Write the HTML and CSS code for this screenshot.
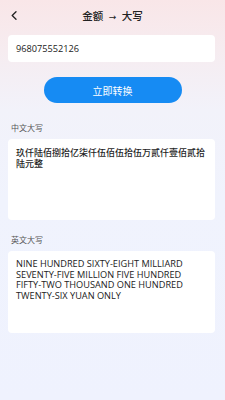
FILE: index.html
```html
<!DOCTYPE html>
<html lang="zh">
<head>
<meta charset="utf-8">
<meta name="viewport" content="width=device-width, initial-scale=1">
<link rel="stylesheet" href="styles.css">
</head>
<body>
<div class="page">
  <header class="header">
    <div class="back">
      <svg width="6" height="9" viewBox="0 0 6 9"><path d="M5 0.8 L1.2 4.5 L5 8.2" fill="none" stroke="#222" stroke-width="1.3" stroke-linecap="round" stroke-linejoin="round"/></svg>
    </div>
    <div class="title">金额 <span class="arrow">→</span> 大写</div>
    <div></div>
  </header>
  <div class="input-card">968075552126</div>
  <div class="btn-row"><button class="btn">立即转换</button></div>
  <div class="label">中文大写</div>
  <div class="card cn">玖仟陆佰捌拾亿柒仟伍佰伍拾伍万贰仟壹佰贰拾陆元整</div>
  <div class="label label2">英文大写</div>
  <div class="card en">NINE HUNDRED SIXTY-EIGHT MILLIARD SEVENTY-FIVE MILLION FIVE HUNDRED FIFTY-TWO THOUSAND ONE HUNDRED TWENTY-SIX YUAN ONLY</div>
</div>
</body>
</html>
```
FILE: styles.css
```css
* { box-sizing: border-box; }
html, body { margin: 0; padding: 0; }
body {
  width: 225px;
  height: 400px;
  overflow: hidden;
  background: linear-gradient(180deg, #f9e6e8 0px, #f6ecf0 50px, #f2f2fa 110px, #f0f3fd 200px, #eff2fe 400px);
  font-family: "Open Sans", "Noto Sans CJK SC", sans-serif;
  color: #222;
}
.page { padding: 0 10px 0 8px; }
.header {
  height: 30px;
  display: grid;
  grid-template-columns: 1fr auto 1fr;
  align-items: center;
}
.back { padding-left: 3px; display: flex; align-items: center; padding-top: 1px; }
.title {
  font-family: "Noto Sans CJK SC", sans-serif;
  font-size: 10.5px;
  font-weight: 500;
  color: #222;
  padding-left: 2px;
}
.arrow { font-family: "DejaVu Sans", sans-serif; font-size: 9px; margin: 0 3px; }
.input-card {
  margin-top: 5px;
  height: 27px;
  background: #fff;
  border-radius: 4px;
  padding-left: 8px;
  display: flex;
  align-items: center;
  font-size: 9.2px;
  color: #222;
}
.btn-row { display: flex; justify-content: center; margin-top: 15px; padding-left: 2px; }
.btn {
  width: 138px;
  height: 26px;
  border: none;
  border-radius: 13px;
  background: #168bf3;
  color: #fff;
  font-family: "Noto Sans CJK SC", sans-serif;
  font-size: 10px;
  padding: 0;
}
.label {
  margin-top: 19px;
  padding-left: 3px;
  font-family: "Noto Sans CJK SC", sans-serif;
  font-size: 8px;
  line-height: 12px;
  color: #555;
}
.label2 { margin-top: 14px; }
.card {
  margin-top: 5px;
  height: 81px;
  background: #fff;
  border-radius: 4px;
  padding: 9px 7px 0 8px;
}
.cn {
  font-family: "Noto Sans CJK SC", sans-serif;
  font-size: 9px;
  font-weight: 500;
  line-height: 10.5px;
  color: #1e1e1e;
}
.en {
  height: 82px;
  padding-top: 8px;
  font-size: 9.2px;
  line-height: 10.5px;
  color: #222;
}
```
